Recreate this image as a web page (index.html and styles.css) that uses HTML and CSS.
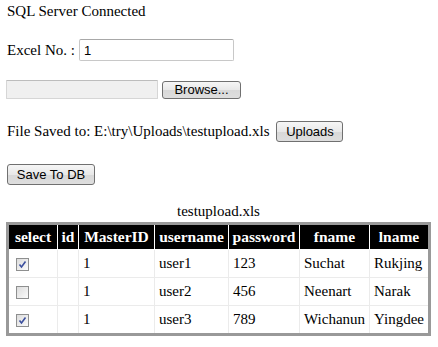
FILE: index.html
```html
<!DOCTYPE html>
<html>
<head>
  <meta charset="utf-8">
  <title>Upload Excel</title>
  <link rel="stylesheet" href="styles.css">
</head>
<body>
  <div class="status">SQL Server Connected</div>

  <div class="row row-excel">
    <label for="excelNo">Excel No. :</label>
    <input id="excelNo" class="text-box" type="text" value="1">
  </div>

  <div class="row row-file">
    <span class="file-box"></span>
    <button class="btn btn-browse">Browse...</button>
  </div>

  <div class="row row-saved">
    <span>File Saved to: E:\try\Uploads\testupload.xls</span>
    <button class="btn btn-upload">Uploads</button>
  </div>

  <div class="row row-save">
    <button class="btn btn-save">Save To DB</button>
  </div>

  <table class="grid">
    <caption>testupload.xls</caption>
    <thead>
      <tr>
        <th class="c-select">select</th>
        <th class="c-id">id</th>
        <th class="c-master">MasterID</th>
        <th class="c-user">username</th>
        <th class="c-pass">password</th>
        <th class="c-fname">fname</th>
        <th class="c-lname">lname</th>
      </tr>
    </thead>
    <tbody>
      <tr>
        <td><span class="check checked"><svg viewBox="0 0 11 11" width="11" height="11"><path d="M2.5 5.5 L4.5 8 L8.5 2.5" fill="none" stroke="#3b4f9e" stroke-width="1.6"/></svg></span></td>
        <td></td>
        <td>1</td>
        <td>user1</td>
        <td>123</td>
        <td>Suchat</td>
        <td>Rukjing</td>
      </tr>
      <tr>
        <td><span class="check"></span></td>
        <td></td>
        <td>1</td>
        <td>user2</td>
        <td>456</td>
        <td>Neenart</td>
        <td>Narak</td>
      </tr>
      <tr>
        <td><span class="check checked"><svg viewBox="0 0 11 11" width="11" height="11"><path d="M2.5 5.5 L4.5 8 L8.5 2.5" fill="none" stroke="#3b4f9e" stroke-width="1.6"/></svg></span></td>
        <td></td>
        <td>1</td>
        <td>user3</td>
        <td>789</td>
        <td>Wichanun</td>
        <td>Yingdee</td>
      </tr>
    </tbody>
  </table>
</body>
</html>
```

FILE: styles.css
```css
body {
  font-family: "Liberation Serif", "Times New Roman", serif;
  font-size: 15px;
  color: #000;
  background-color: #fff;
  margin: 0;
  padding: 2px 7px 0 7px;
}

.status {
  height: 18px;
  line-height: 18px;
}

.row {
  display: flex;
  align-items: center;
}

.row-excel {
  margin-top: 19px;
  height: 22px;
}

.row-excel label {
  margin-right: 4px;
}

.text-box {
  width: 155px;
  height: 22px;
  box-sizing: border-box;
  border: 1px solid #c8c8c8;
  border-top-color: #a8a8a8;
  border-radius: 2px;
  padding: 0 4px;
  font-family: "Liberation Sans", Arial, sans-serif;
  font-size: 13px;
  margin: 0;
}

.row-file {
  margin-top: 19px;
  height: 19px;
  margin-left: -1px;
}

.file-box {
  display: block;
  width: 152px;
  height: 19px;
  box-sizing: border-box;
  background-color: #f0f0f0;
  border: 1px solid #d6d6d6;
  border-top-color: #bdbdbd;
  border-radius: 1px;
}

.btn {
  font-family: "Liberation Sans", Arial, sans-serif;
  font-size: 13px;
  color: #000;
  background: linear-gradient(#f6f6f6, #e8e8e8 50%, #d8d8d8 51%, #dedede);
  border: 1px solid #707070;
  border-radius: 3px;
  padding: 0;
  margin: 0;
  box-sizing: border-box;
}

.btn-browse {
  width: 79px;
  height: 18px;
  margin-left: 4px;
  line-height: 14px;
}

.row-saved {
  margin-top: 21px;
  height: 22px;
}

.btn-upload {
  width: 67px;
  height: 21px;
  margin-left: 7px;
}

.row-save {
  margin-top: 21px;
  height: 22px;
}

.btn-save {
  width: 88px;
  height: 21px;
}

.grid {
  margin-top: 17px;
  margin-left: -1px;
  border-collapse: collapse;
  border: 3px solid #999;
  table-layout: fixed;
  width: 425px;
}

.grid caption {
  line-height: 18px;
  padding-bottom: 2px;
}

.grid th {
  box-sizing: border-box;
  background-color: #000;
  color: #fff;
  font-size: 15.5px;
  font-weight: bold;
  height: 26px;
  padding: 0 2px;
  border: 1px solid #fff;
  border-top: 0;
  white-space: nowrap;
  overflow: hidden;
}

.grid td {
  height: 27px;
  padding: 0 4px;
  border: 1px solid #ebebeb;
  white-space: nowrap;
  overflow: hidden;
}

.c-select { width: 50px; }
.c-id { width: 21px; }
.c-master { width: 76px; }
.c-user { width: 74px; }
.c-pass { width: 71px; }
.c-fname { width: 70px; }

.check {
  display: inline-flex;
  align-items: center;
  justify-content: center;
  width: 13px;
  height: 13px;
  box-sizing: border-box;
  border: 1px solid #8e8f8f;
  background: linear-gradient(135deg, #dcdcdc, #fbfbfb);
  margin-left: 3px;
  vertical-align: middle;
}

.check svg {
  display: block;
}
```
